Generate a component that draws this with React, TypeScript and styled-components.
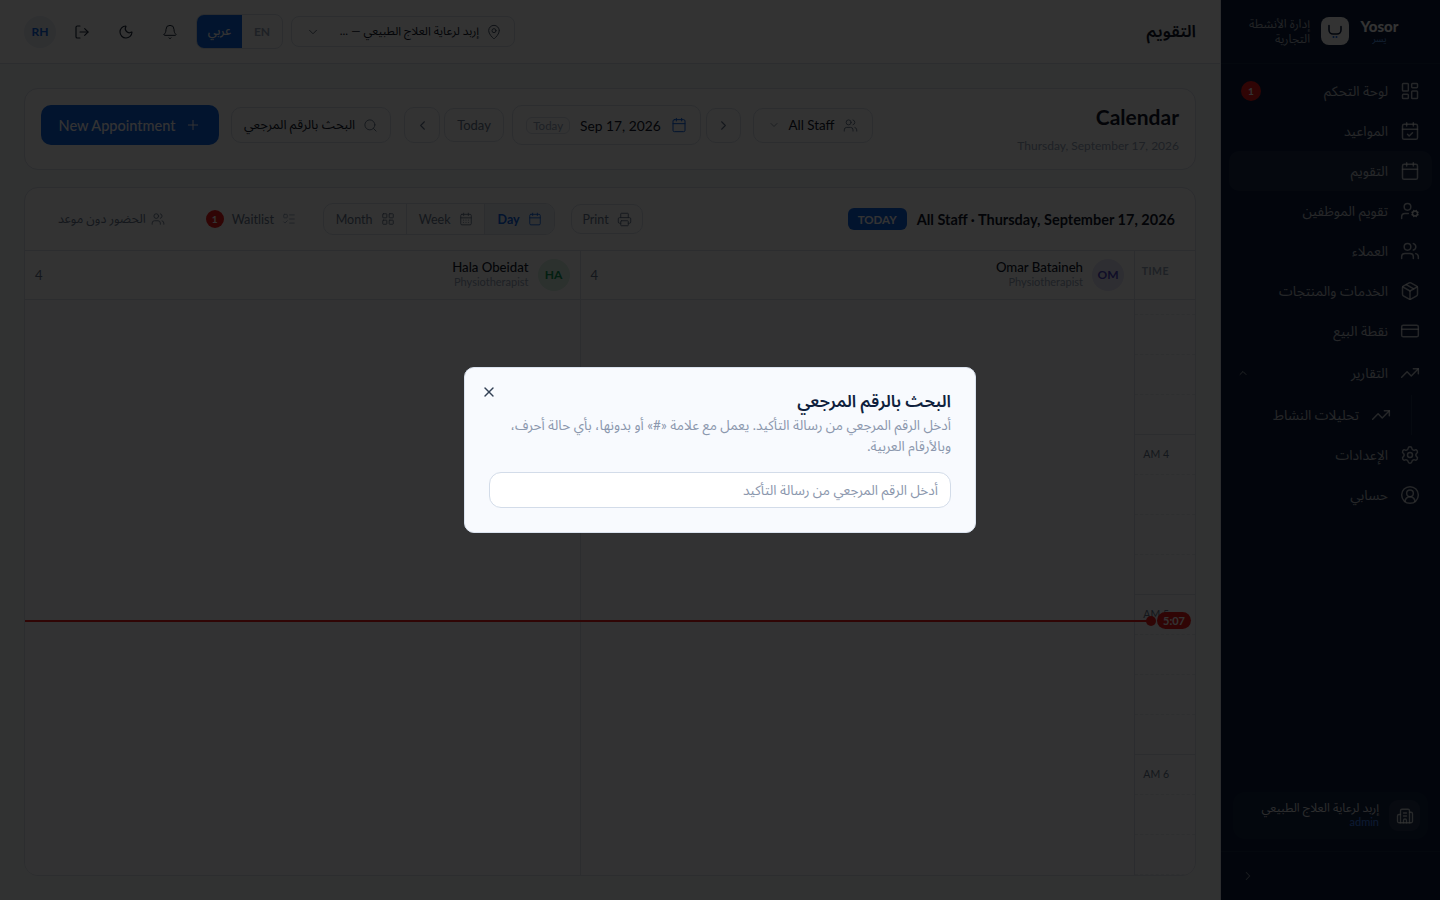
import React from 'react';
import styled, { createGlobalStyle } from 'styled-components';
import {
  Bell,
  Building2,
  Calendar,
  CalendarCheck,
  CalendarDays,
  ChevronDown,
  ChevronLeft,
  ChevronRight,
  ChevronUp,
  CircleUserRound,
  CreditCard,
  LayoutDashboard,
  LayoutGrid,
  ListTodo,
  LogOut,
  MapPin,
  Moon,
  Package,
  Plus,
  Printer,
  Search,
  Settings,
  TrendingUp,
  UserCog,
  Users,
  X,
} from 'lucide-react';

const line = '#d9dfe9';

const GlobalStyle = createGlobalStyle`
  * { box-sizing: border-box; }
  html, body { margin: 0; height: 100%; }
  body {
    font-family: Lato, "Noto Sans Arabic", "Noto Sans", sans-serif;
    background: #f6f7f9;
    color: #0f172a;
    overflow: hidden;
  }
`;

const Shell = styled.div`
  height: 900px;
  display: flex;
  direction: rtl;
`;

const Sidebar = styled.aside`
  width: 219px;
  flex: none;
  display: flex;
  flex-direction: column;
  background: #0a1c3c;
  color: #ffffff;
`;

const Brand = styled.div`
  height: 64px;
  flex: none;
  display: flex;
  align-items: center;
  gap: 11px;
  padding: 0 41px 2px 0;
  border-bottom: 1px solid rgba(255, 255, 255, 0.06);
`;

const BrandNames = styled.div`
  width: 39px;
  text-align: center;
`;

const BrandName = styled.div`
  font-size: 15px;
  line-height: 15px;
  font-weight: 900;
`;

const BrandSub = styled.div`
  font-size: 9px;
  line-height: 9px;
  color: #60a5fa;
`;

const Logo = styled.div`
  width: 28px;
  height: 28px;
  border-radius: 8px;
  background: #ffffff;
  display: flex;
  align-items: center;
  justify-content: center;
`;

const BrandNote = styled.div`
  width: 62px;
  font-size: 12px;
  line-height: 15px;
  color: rgba(255, 255, 255, 0.65);
`;

const Nav = styled.nav`
  flex: 1;
  padding: 7px 8px 0 8px;
  display: flex;
  flex-direction: column;
`;

const NavItem = styled.div<{ $active?: boolean; $tall?: boolean }>`
  height: ${(p) => (p.$tall ? '44px' : '40px')};
  flex: none;
  display: flex;
  align-items: center;
  gap: 12px;
  padding: 0 12px;
  border-radius: 10px;
  font-size: 13.8px;
  color: rgba(255, 255, 255, 0.72);
  background: ${(p) => (p.$active ? 'rgba(255, 255, 255, 0.07)' : 'transparent')};

  svg {
    flex: none;
  }
`;

const NavLabel = styled.span`
  flex: 1;
`;

const NavBadge = styled.span`
  width: 20px;
  height: 20px;
  border-radius: 50%;
  background: #ef1c1c;
  color: #fff;
  font-size: 10px;
  font-weight: 700;
  display: flex;
  align-items: center;
  justify-content: center;
`;

const GroupChevron = styled(ChevronUp)`
  margin-left: -4px;
`;

const SubNav = styled.div`
  margin-right: 20px;
  border-right: 1px solid rgba(255, 255, 255, 0.1);
  height: 40px;
  display: flex;
  align-items: center;
  gap: 12px;
  padding: 0 20px;
  font-size: 13.8px;
  color: rgba(255, 255, 255, 0.72);
`;

const OrgCard = styled.div`
  margin: 0 12px 12px 12px;
  height: 47px;
  flex: none;
  display: flex;
  align-items: center;
  gap: 10px;
  padding: 0 8px;
  border-radius: 12px;
  background: rgba(255, 255, 255, 0.04);
`;

const OrgIcon = styled.div`
  width: 31px;
  height: 31px;
  border-radius: 9px;
  background: rgba(255, 255, 255, 0.08);
  display: flex;
  align-items: center;
  justify-content: center;
  color: rgba(255, 255, 255, 0.75);
`;

const OrgText = styled.div`
  padding-bottom: 2px;
`;

const OrgName = styled.div`
  font-size: 12px;
  line-height: 15px;
  color: rgba(255, 255, 255, 0.85);
`;

const OrgRole = styled.div`
  font-size: 11px;
  line-height: 14px;
  color: #3b82f6;
`;

const SidebarFoot = styled.div`
  height: 49px;
  flex: none;
  display: flex;
  align-items: center;
  justify-content: flex-end;
  padding: 0 20px;
  border-top: 1px solid rgba(255, 255, 255, 0.06);
  color: rgba(255, 255, 255, 0.5);
`;

const Main = styled.div`
  flex: 1;
  min-width: 0;
  display: flex;
  flex-direction: column;
  border-right: 1px solid ${line};
`;

const Header = styled.header`
  height: 64px;
  flex: none;
  display: flex;
  align-items: center;
  justify-content: space-between;
  padding: 0 24px;
  background: #ffffff;
  border-bottom: 1px solid ${line};
`;

const PageTitle = styled.h1`
  margin: 0;
  font-size: 17px;
  font-weight: 600;
`;

const HeaderTools = styled.div`
  display: flex;
  align-items: center;
`;

const BranchSelect = styled.div`
  width: 224px;
  height: 31px;
  display: flex;
  align-items: center;
  gap: 7px;
  padding: 0 12px 0 14px;
  border: 1px solid ${line};
  border-radius: 8px;
  font-size: 11.8px;
  color: #475569;

  span {
    flex: 1;
    color: #0f172a;
    white-space: nowrap;
  }
`;

const LangSwitch = styled.div`
  margin-right: 8px;
  height: 35px;
  display: flex;
  direction: ltr;
  border: 1px solid ${line};
  border-radius: 8px;
  overflow: hidden;
`;

const LangOption = styled.div<{ $on?: boolean }>`
  width: ${(p) => (p.$on ? '45px' : '40px')};
  display: flex;
  align-items: center;
  justify-content: center;
  font-size: 12px;
  font-weight: ${(p) => (p.$on ? 500 : 700)};
  background: ${(p) => (p.$on ? '#0b63e5' : 'transparent')};
  color: ${(p) => (p.$on ? '#ffffff' : '#94a3b8')};
`;

const IconButton = styled.div`
  width: 36px;
  height: 36px;
  margin-right: 8px;
  display: flex;
  align-items: center;
  justify-content: center;
  color: #1e293b;
`;

const Avatar = styled.div<{ $bg: string; $fg: string; $gap?: number }>`
  width: 32px;
  height: 32px;
  margin-right: ${(p) => p.$gap ?? 0}px;
  flex: none;
  border-radius: 50%;
  background: ${(p) => p.$bg};
  color: ${(p) => p.$fg};
  display: flex;
  align-items: center;
  justify-content: center;
  font-size: 12px;
  font-weight: 700;
`;

const Content = styled.main`
  flex: 1;
  min-height: 0;
  display: flex;
  flex-direction: column;
  gap: 17px;
  padding: 24px;
`;

const Card = styled.section`
  background: #ffffff;
  border: 1px solid ${line};
  border-radius: 14px;
`;

const Toolbar = styled(Card)`
  height: 82px;
  flex: none;
  display: flex;
  align-items: flex-start;
  justify-content: space-between;
  padding: 16px 16px 0 16px;
`;

const ToolbarTitle = styled.div`
  font-size: 21px;
  line-height: 23px;
  font-weight: 700;
`;

const ToolbarSub = styled.div`
  margin-top: 10px;
  direction: ltr;
  text-align: right;
  font-size: 12px;
  line-height: 16px;
  color: #94a3b8;
`;

const Controls = styled.div`
  display: flex;
  align-items: center;
  height: 40px;
`;

const Outline = styled.div<{ $w: number; $h: number; $gap?: number; $space?: number; $small?: boolean }>`
  width: ${(p) => p.$w}px;
  height: ${(p) => p.$h}px;
  margin-right: ${(p) => p.$gap ?? 0}px;
  flex: none;
  display: flex;
  align-items: center;
  justify-content: center;
  gap: ${(p) => p.$space ?? 8}px;
  border: 1px solid ${line};
  border-radius: 10px;
  font-size: ${(p) => (p.$small ? '12.5px' : '13px')};
  color: #64748b;
`;

const Strong = styled.span<{ $size: number }>`
  color: #0f172a;
  font-size: ${(p) => p.$size}px;
`;

const TodayTag = styled.span`
  padding: 1px 6px;
  border: 1px solid ${line};
  border-radius: 6px;
  font-size: 11.5px;
  color: #94a3b8;
`;

const Primary = styled.div`
  width: 178px;
  height: 40px;
  margin-right: 12px;
  flex: none;
  display: flex;
  align-items: center;
  justify-content: center;
  gap: 10px;
  border-radius: 10px;
  background: #0b63e5;
  color: #ffffff;
  font-size: 14.5px;
  font-weight: 500;
`;

const Board = styled(Card)`
  flex: 1;
  min-height: 0;
  display: flex;
  flex-direction: column;
  overflow: hidden;
`;

const BoardBar = styled.div`
  height: 63px;
  flex: none;
  display: flex;
  align-items: center;
  justify-content: space-between;
  padding: 0 20px 0 33px;
  border-bottom: 1px solid ${line};
`;

const BoardHeading = styled.div`
  display: flex;
  align-items: center;
  gap: 10px;
  font-size: 14.5px;
  font-weight: 700;
`;

const TodayPill = styled.span`
  width: 59px;
  height: 22px;
  display: flex;
  align-items: center;
  justify-content: center;
  border-radius: 6px;
  background: #0b63e5;
  color: #ffffff;
  font-size: 11.5px;
  font-weight: 700;
`;

const BoardActions = styled.div`
  display: flex;
  align-items: center;
`;

const Views = styled.div`
  height: 32px;
  margin-right: 16px;
  display: flex;
  border: 1px solid ${line};
  border-radius: 10px;
  overflow: hidden;
`;

const ViewTab = styled.div<{ $on?: boolean; $w: number }>`
  width: ${(p) => p.$w}px;
  display: flex;
  align-items: center;
  justify-content: center;
  gap: 8px;
  font-size: 12.5px;
  font-weight: ${(p) => (p.$on ? 700 : 400)};
  color: ${(p) => (p.$on ? '#0b63e5' : '#64748b')};
  background: ${(p) => (p.$on ? '#eff4fb' : 'transparent')};

  & + & {
    border-right: 1px solid ${line};
  }
`;

const TextAction = styled.div<{ $gap: number; $space: number }>`
  margin-right: ${(p) => p.$gap}px;
  display: flex;
  align-items: center;
  gap: ${(p) => p.$space}px;
  font-size: 12.7px;
  color: #64748b;
`;

const WalkInLabel = styled.span`
  font-size: 12.4px;
`;

const WaitBadge = styled.span`
  width: 18px;
  height: 18px;
  border-radius: 50%;
  background: #ef1c1c;
  color: #fff;
  font-size: 10px;
  font-weight: 700;
  display: flex;
  align-items: center;
  justify-content: center;
`;

const Grid = styled.div`
  flex: 1;
  min-height: 0;
  position: relative;
  display: grid;
  grid-template-columns: 61px 1fr 1fr;
  grid-template-rows: 49px 1fr;
`;

const HeadCell = styled.div`
  border-bottom: 1px solid ${line};
  border-left: 1px solid ${line};

  &:nth-child(3) {
    border-left: 0;
  }
`;

const TimeHead = styled(HeadCell)`
  padding: 14px 26px 0 0;
  font-size: 10.5px;
  line-height: 13px;
  letter-spacing: 0.5px;
  color: #94a3b8;
  font-weight: 700;
`;

const StaffHead = styled(HeadCell)`
  display: flex;
  align-items: center;
  gap: 9px;
  padding: 0 10px 1px 10px;
`;

const StaffInfo = styled.div`
  flex: 1;
`;

const StaffName = styled.div`
  font-size: 13.2px;
  line-height: 15px;
  font-weight: 500;
  color: #0f172a;
`;

const StaffRole = styled.div`
  font-size: 11px;
  line-height: 14px;
  color: #94a3b8;
`;

const StaffCount = styled.div`
  font-size: 13px;
  color: #64748b;
`;

const TimeColumn = styled.div`
  background: #f8f9fc;
  border-left: 1px solid #d5daea;
`;

const StaffColumn = styled.div<{ $last?: boolean }>`
  background: #f8f9fc;
  border-left: ${(p) => (p.$last ? '0' : `1px solid ${line}`)};
`;

const Slot = styled.div<{ $h?: number; $end?: boolean }>`
  height: ${(p) => p.$h ?? 40}px;
  padding: 13px 26px 0 0;
  border-bottom: 1px ${(p) => (p.$end ? `solid ${line}` : 'dashed #e4e8ef')};
  font-size: 10.5px;
  line-height: 13px;
  color: #64748b;
`;

const NowLine = styled.div`
  position: absolute;
  top: 369px;
  left: 0;
  right: 44px;
  height: 2px;
  background: #ef1c1c;
`;

const NowDot = styled.span`
  position: absolute;
  right: -5px;
  top: -4px;
  width: 10px;
  height: 10px;
  border-radius: 50%;
  background: #ef1c1c;
`;

const NowTag = styled.span`
  position: absolute;
  right: -40px;
  top: -8px;
  width: 34px;
  height: 17px;
  border-radius: 9px;
  background: #ef1c1c;
  color: #fff;
  font-size: 11px;
  font-weight: 700;
  display: flex;
  align-items: center;
  justify-content: center;
`;

const Overlay = styled.div`
  position: fixed;
  inset: 0;
  display: flex;
  align-items: center;
  justify-content: center;
  background: rgba(0, 0, 0, 0.8);
  direction: rtl;
`;

const Dialog = styled.div`
  position: relative;
  width: 512px;
  height: 166px;
  padding: 24px;
  border: 1px solid #dbe3ef;
  border-radius: 10px;
  background: #f8fafe;
`;

const DialogTitle = styled.h2`
  margin: 0 0 5px 0;
  font-size: 17px;
  line-height: 18px;
  font-weight: 600;
  color: #0f1f3d;
`;

const DialogText = styled.p`
  margin: 0;
  font-size: 13.6px;
  line-height: 21px;
  color: #8b97ad;
`;

const ReferenceInput = styled.input`
  display: block;
  width: 100%;
  height: 36px;
  margin-top: 15px;
  padding: 0 12px;
  border: 1px solid #d3dce9;
  border-radius: 12px;
  background: #ffffff;
  font: inherit;
  font-size: 13.6px;
  outline: none;

  &::placeholder {
    color: #8b97ad;
  }
`;

const CloseButton = styled.div`
  position: absolute;
  left: 16px;
  top: 16px;
  display: flex;
  color: #334155;
`;

const navItems = [
  { icon: LayoutDashboard, label: 'لوحة التحكم', badge: true },
  { icon: CalendarCheck, label: 'المواعيد' },
  { icon: Calendar, label: 'التقويم', active: true },
  { icon: UserCog, label: 'تقويم الموظفين' },
  { icon: Users, label: 'العملاء' },
  { icon: Package, label: 'الخدمات والمنتجات' },
  { icon: CreditCard, label: 'نقطة البيع' },
];

const staff = [
  { initials: 'OM', name: 'Omar Bataineh', bg: '#e6e4f7', fg: '#4f46c8' },
  { initials: 'HA', name: 'Hala Obeidat', bg: '#d9f3e4', fg: '#0f9d58' },
];

const hours = ['AM 4', 'AM 5', 'AM 6'];

const App = () => (
  <>
    <GlobalStyle />
    <Shell>
      <Sidebar>
        <Brand>
          <BrandNames>
            <BrandName>Yosor</BrandName>
            <BrandSub>يسر</BrandSub>
          </BrandNames>
          <Logo>
            <svg width="18" height="18" viewBox="0 0 18 18" fill="none">
              <path d="M3 3.5v4.5a4 4 0 0 0 4 4h4a4 4 0 0 0 4-4V4.5" stroke="#0a1c3c" strokeWidth="1.6" strokeLinecap="round" />
              <circle cx="7.5" cy="15" r="1" fill="#0b63e5" />
              <circle cx="10.5" cy="15" r="1" fill="#0b63e5" />
            </svg>
          </Logo>
          <BrandNote>إدارة الأنشطة التجارية</BrandNote>
        </Brand>
        <Nav>
          {navItems.map(({ icon: Icon, label, badge, active }) => (
            <NavItem key={label} $active={active}>
              <Icon size={20} strokeWidth={1.75} />
              <NavLabel>{label}</NavLabel>
              {badge && <NavBadge>1</NavBadge>}
            </NavItem>
          ))}
          <NavItem $tall>
            <TrendingUp size={20} strokeWidth={1.75} />
            <NavLabel>التقارير</NavLabel>
            <GroupChevron size={12} strokeWidth={1.75} />
          </NavItem>
          <SubNav>
            <TrendingUp size={20} strokeWidth={1.75} />
            تحليلات النشاط
          </SubNav>
          <NavItem>
            <Settings size={20} strokeWidth={1.75} />
            <NavLabel>الإعدادات</NavLabel>
          </NavItem>
          <NavItem>
            <CircleUserRound size={20} strokeWidth={1.75} />
            <NavLabel>حسابي</NavLabel>
          </NavItem>
        </Nav>
        <OrgCard>
          <OrgIcon>
            <Building2 size={18} strokeWidth={1.75} />
          </OrgIcon>
          <OrgText>
            <OrgName>إربد لرعاية العلاج الطبيعي</OrgName>
            <OrgRole>admin</OrgRole>
          </OrgText>
        </OrgCard>
        <SidebarFoot>
          <ChevronRight size={14} strokeWidth={1.75} />
        </SidebarFoot>
      </Sidebar>
      <Main>
        <Header>
          <PageTitle>التقويم</PageTitle>
          <HeaderTools>
            <BranchSelect>
              <MapPin size={16} strokeWidth={1.5} />
              <span>إربد لرعاية العلاج الطبيعي — ...</span>
              <ChevronDown size={14} strokeWidth={1.5} />
            </BranchSelect>
            <LangSwitch>
              <LangOption $on>عربي</LangOption>
              <LangOption>EN</LangOption>
            </LangSwitch>
            <IconButton>
              <Bell size={16} strokeWidth={1.5} />
            </IconButton>
            <IconButton>
              <Moon size={16} strokeWidth={1.75} />
            </IconButton>
            <IconButton>
              <LogOut size={16} strokeWidth={1.75} />
            </IconButton>
            <Avatar $bg="#e8edf6" $fg="#0b63e5" $gap={8}>RH</Avatar>
          </HeaderTools>
        </Header>
        <Content>
          <Toolbar>
            <div>
              <ToolbarTitle>Calendar</ToolbarTitle>
              <ToolbarSub>Thursday, September 17, 2026</ToolbarSub>
            </div>
            <Controls>
              <Outline $w={120} $h={35}>
                <Users size={15} strokeWidth={1.5} />
                <Strong $size={13.4}>All Staff</Strong>
                <ChevronDown size={12} strokeWidth={1.5} />
              </Outline>
              <Outline $w={35} $h={35} $gap={12}>
                <ChevronRight size={15} strokeWidth={1.75} />
              </Outline>
              <Outline $w={189} $h={40} $gap={5} $space={10}>
                <Calendar size={16} strokeWidth={1.5} color="#0b63e5" />
                <Strong $size={13.8}>Sep 17, 2026</Strong>
                <TodayTag>Today</TodayTag>
              </Outline>
              <Outline $w={60} $h={34} $gap={8}>Today</Outline>
              <Outline $w={36} $h={36} $gap={4}>
                <ChevronLeft size={15} strokeWidth={1.75} />
              </Outline>
              <Outline $w={160} $h={36} $gap={13}>
                <Search size={15} strokeWidth={1.5} />
                <Strong $size={13}>البحث بالرقم المرجعي</Strong>
              </Outline>
              <Primary>
                <Plus size={16} strokeWidth={1.5} />
                New Appointment
              </Primary>
            </Controls>
          </Toolbar>
          <Board>
            <BoardBar>
              <BoardHeading>
                All Staff · Thursday, September 17, 2026
                <TodayPill>TODAY</TodayPill>
              </BoardHeading>
              <BoardActions>
                <Outline $w={72} $h={30} $small>
                  <Printer size={15} strokeWidth={1.5} />
                  Print
                </Outline>
                <Views>
                  <ViewTab $on $w={69}>
                    <Calendar size={14} strokeWidth={1.5} />
                    Day
                  </ViewTab>
                  <ViewTab $w={78}>
                    <CalendarDays size={14} strokeWidth={1.5} />
                    Week
                  </ViewTab>
                  <ViewTab $w={83}>
                    <LayoutGrid size={14} strokeWidth={1.5} />
                    Month
                  </ViewTab>
                </Views>
                <TextAction $gap={27} $space={8}>
                  <ListTodo size={14} strokeWidth={1.5} color="#94a3b8" />
                  Waitlist
                  <WaitBadge>1</WaitBadge>
                </TextAction>
                <TextAction $gap={41} $space={5}>
                  <Users size={14} strokeWidth={1.5} />
                  <WalkInLabel>الحضور دون موعد</WalkInLabel>
                </TextAction>
              </BoardActions>
            </BoardBar>
            <Grid>
              <TimeHead>TIME</TimeHead>
              {staff.map((s) => (
                <StaffHead key={s.initials}>
                  <Avatar $bg={s.bg} $fg={s.fg}>{s.initials}</Avatar>
                  <StaffInfo>
                    <StaffName>{s.name}</StaffName>
                    <StaffRole>Physiotherapist</StaffRole>
                  </StaffInfo>
                  <StaffCount>4</StaffCount>
                </StaffHead>
              ))}
              <TimeColumn>
                <Slot $h={15} />
                <Slot />
                <Slot />
                <Slot $end />
                {hours.map((hour) => (
                  <React.Fragment key={hour}>
                    <Slot>{hour}</Slot>
                    <Slot />
                    <Slot />
                    <Slot $end />
                  </React.Fragment>
                ))}
              </TimeColumn>
              <StaffColumn />
              <StaffColumn $last />
              <NowLine>
                <NowDot />
                <NowTag>5:07</NowTag>
              </NowLine>
            </Grid>
          </Board>
        </Content>
      </Main>
    </Shell>
    <Overlay>
      <Dialog>
        <CloseButton>
          <X size={16} />
        </CloseButton>
        <DialogTitle>البحث بالرقم المرجعي</DialogTitle>
        <DialogText>
          أدخل الرقم المرجعي من رسالة التأكيد. يعمل مع علامة «#» أو بدونها، بأي حالة أحرف، وبالأرقام العربية.
        </DialogText>
        <ReferenceInput placeholder="أدخل الرقم المرجعي من رسالة التأكيد" />
      </Dialog>
    </Overlay>
  </>
);

export default App;
